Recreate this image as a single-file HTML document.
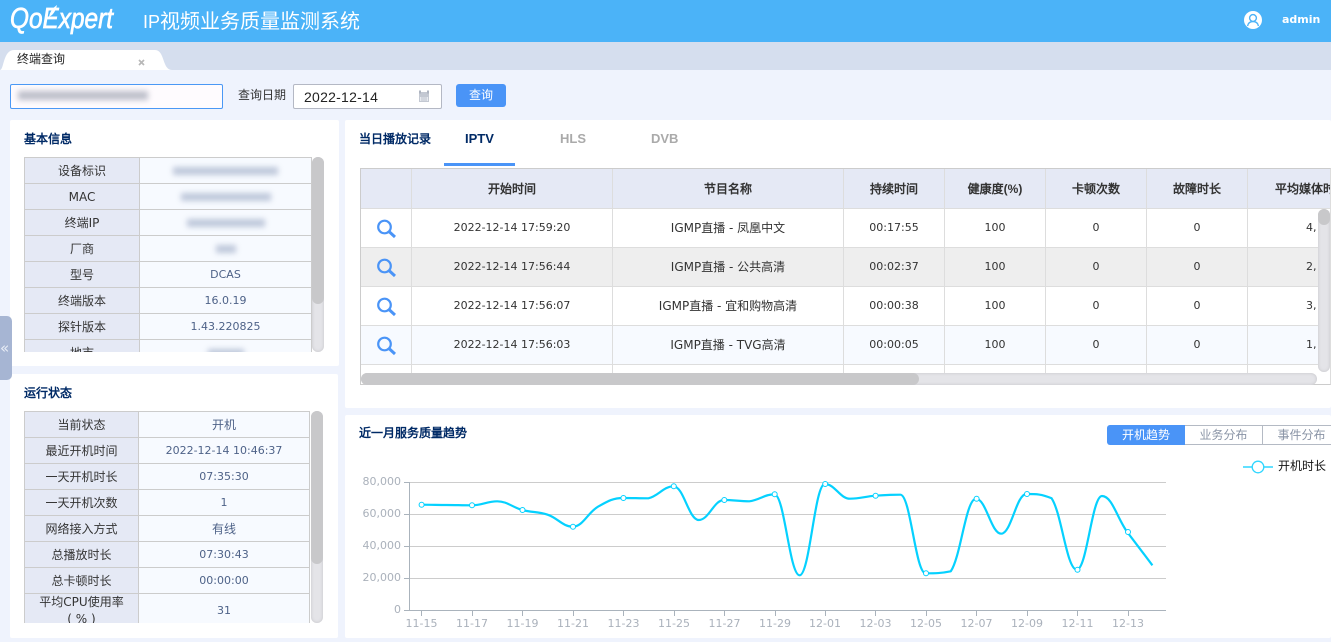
<!DOCTYPE html>
<html lang="zh"><head><meta charset="utf-8"><title>IP视频业务质量监测系统</title>
<style>
*{box-sizing:border-box}
html,body{margin:0;padding:0;width:1331px;height:642px;overflow:hidden;background:#eff3fd}
body{font-family:"DejaVu Sans","WenQuanYi Zen Hei","Noto Sans CJK SC",sans-serif;font-size:12px;color:#333;position:relative}
.a{position:absolute}
.t{position:absolute;white-space:nowrap}
.panel{position:absolute;background:#fff;border-radius:2px}
.title{position:absolute;white-space:nowrap;font-family:"Liberation Sans","WenQuanYi Zen Hei",sans-serif;font-weight:bold;color:#002a66;font-size:12px;line-height:16px}
table{border-collapse:collapse;table-layout:fixed;position:absolute;left:0;top:0}
td,th{border:1px solid #ccc;text-align:center;padding:0;font-size:12px;font-weight:normal;overflow:hidden}
.n{font-size:11px}
.info td{height:26px;line-height:14px}
.info td:first-child{background:#e5e9f5;color:#333}
.info td:last-child{background:#f7faff;color:#4e6288}
.blur{display:block;margin:auto;height:8px;background:#b4bfd4;filter:blur(3px);opacity:.85}
.rec th{height:39.5px;background:#e5e9f5;font-family:"Liberation Sans","WenQuanYi Zen Hei",sans-serif;font-weight:bold;border-color:#ddd}
.rec td{height:39px;border-color:#ddd;color:#333;font-size:11px}
.rec td.p{font-size:12px}
.rec tr.g td{background:#eee}
.rec tr.l td{background:#f7faff}
.track{position:absolute;background:#e4e4e8;border-radius:6px;box-shadow:inset 0 0 3px #c4c4c8}
.thumb{position:absolute;background:#c8c8ca;border-radius:6px}
svg text{font-family:"DejaVu Sans","WenQuanYi Zen Hei",sans-serif}
</style></head><body>

<div class="a" style="left:0;top:0;width:1331px;height:42px;background:#4bb3f8"></div>
<svg class="a" style="left:0;top:0" width="130" height="42"><text x="10" y="28" font-size="29" font-style="italic" fill="#fff" stroke="#fff" stroke-width=".7" textLength="103" lengthAdjust="spacingAndGlyphs" style="font-family:'Liberation Sans',sans-serif">QoExpert</text><path d="M49 17C50 11 53 8 57 5C56 9 55 12 52 15Z" fill="#fff"/></svg>
<div class="t" style="left:143px;top:10px;font-size:20px;line-height:24px;color:#fff;font-family:'Liberation Sans','WenQuanYi Zen Hei',sans-serif"><span style="font-size:18px">IP</span>视频业务质量监测系统</div>
<svg class="a" style="left:1244px;top:11px" width="18" height="18" viewBox="0 0 18 18"><circle cx="9" cy="9" r="9" fill="#fff"/><circle cx="9" cy="7" r="3.4" fill="none" stroke="#4bb3f8" stroke-width="1.4"/><path d="M3.600 15c.5-3 2.600-4.400 5.400-4.400s4.900 1.400 5.400 4.400" fill="none" stroke="#4bb3f8" stroke-width="1.4"/></svg>
<div class="t" style="left:1282px;top:12px;font-size:11px;line-height:16px;font-weight:bold;color:#fff">admin</div>

<div class="a" style="left:0;top:42px;width:1331px;height:28px;background:#d5deee"></div>
<svg class="a" style="left:0;top:49px" width="175" height="21"><path d="M0 21C4 21 3 1 14 1H155C165 1 162 21 172 21Z" fill="#fff"/></svg>
<div class="t" style="left:17px;top:51px;line-height:16px;color:#222">终端查询</div>
<svg class="a" style="left:138px;top:59px" width="7" height="7"><path d="M1 1L6 6M6 1L1 6" stroke="#b8b8b8" stroke-width="1.700"/></svg>

<div class="a" style="left:10px;top:84px;width:213px;height:25px;background:#fefbfe;border:1px solid #4a98f5;border-radius:2px"></div>
<div class="a" style="left:18px;top:91px;width:130px;height:9px;background:#bdbfca;filter:blur(3px)"></div>
<div class="t" style="left:238px;top:87px;line-height:16px;color:#333">查询日期</div>
<div class="a" style="left:293px;top:84px;width:149px;height:25px;background:#fff;border:1px solid #b4b8c4;border-radius:2px"></div>
<div class="t" style="left:304px;top:89px;font-family:'Liberation Sans',sans-serif;font-size:14px;line-height:16px;color:#222;letter-spacing:.25px">2022-12-14</div>
<svg class="a" style="left:418px;top:90px" width="12" height="13" viewBox="0 0 12 13"><rect x="1" y="2" width="10" height="10" fill="#c3c8d2"/><rect x="1" y="0.500" width="2" height="3" fill="#aeb4c0"/><rect x="9" y="0.500" width="2" height="3" fill="#aeb4c0"/><rect x="2" y="7" width="8" height="4" fill="#e8ebf0"/><path d="M4 7v4M6 7v4M8 7v4" stroke="#b0b6c2" stroke-width=".8"/></svg>
<div class="t" style="left:456px;top:84px;width:50px;height:23px;background:#4a94f7;border-radius:3px;color:#fff;text-align:center;line-height:22px">查询</div>

<!-- basic info -->
<div class="panel" style="left:10px;top:120px;width:329px;height:246px"></div>
<div class="title" style="left:24px;top:131px">基本信息</div>
<div class="a" style="left:24px;top:157px;width:288px;height:195px;overflow:hidden">
<table class="info" style="width:288px"><colgroup><col style="width:115px"><col></colgroup>
<tr><td>设备标识</td><td><span class="blur" style="width:105px"></span></td></tr>
<tr><td>MAC</td><td><span class="blur" style="width:90px"></span></td></tr>
<tr><td>终端IP</td><td><span class="blur" style="width:78px"></span></td></tr>
<tr><td>厂商</td><td><span class="blur" style="width:20px"></span></td></tr>
<tr><td>型号</td><td class="n">DCAS</td></tr>
<tr><td>终端版本</td><td class="n">16.0.19</td></tr>
<tr><td>探针版本</td><td class="n">1.43.220825</td></tr>
<tr><td>地市</td><td><span class="blur" style="width:36px"></span></td></tr>
</table></div>
<div class="track" style="left:312px;top:157px;width:12px;height:195px"></div>
<div class="thumb" style="left:312px;top:157px;width:12px;height:147px"></div>

<!-- run status -->
<div class="panel" style="left:10px;top:374px;width:328px;height:264px"></div>
<div class="title" style="left:24px;top:385px">运行状态</div>
<div class="a" style="left:24px;top:411px;width:286px;height:212px;overflow:hidden">
<table class="info" style="width:286px"><colgroup><col style="width:114px"><col></colgroup>
<tr><td>当前状态</td><td>开机</td></tr>
<tr><td>最近开机时间</td><td class="n">2022-12-14 10:46:37</td></tr>
<tr><td>一天开机时长</td><td class="n">07:35:30</td></tr>
<tr><td>一天开机次数</td><td class="n">1</td></tr>
<tr><td>网络接入方式</td><td>有线</td></tr>
<tr><td>总播放时长</td><td class="n">07:30:43</td></tr>
<tr><td>总卡顿时长</td><td class="n">00:00:00</td></tr>
<tr><td style="line-height:17px">平均CPU使用率<br>( % )</td><td class="n">31</td></tr>
</table></div>
<div class="track" style="left:311px;top:411px;width:12px;height:212px"></div>
<div class="thumb" style="left:311px;top:411px;width:12px;height:153px"></div>

<div class="a" style="left:0;top:316px;width:12px;height:64px;background:#a6b5d3;border-radius:0 5px 5px 0"></div>
<div class="t" style="left:0;top:339px;color:#e8edf6;font-size:15px;line-height:18px">«</div>

<!-- records -->
<div class="panel" style="left:345px;top:120px;width:986px;height:288px"></div>
<div class="title" style="left:359px;top:131px">当日播放记录</div>
<div class="t" style="left:465px;top:131px;font-family:'Liberation Sans',sans-serif;font-weight:bold;color:#002a66;line-height:16px;font-size:13px">IPTV</div>
<div class="t" style="left:560px;top:131px;font-family:'Liberation Sans',sans-serif;font-weight:bold;color:#aaa;line-height:16px;font-size:13px">HLS</div>
<div class="t" style="left:651px;top:131px;font-family:'Liberation Sans',sans-serif;font-weight:bold;color:#aaa;line-height:16px;font-size:13px">DVB</div>
<div class="a" style="left:444px;top:163px;width:71px;height:3px;background:#4a94f7"></div>

<div class="a" style="left:360px;top:168px;width:971px;height:217px;border:1px solid #ccc;border-right:1px solid #ddd;overflow:hidden">
<table class="rec" style="width:1120px;left:-1px;top:-1px"><colgroup><col style="width:51px"><col style="width:201px"><col style="width:231px"><col style="width:101px"><col style="width:101px"><col style="width:101px"><col style="width:101px"><col style="width:233px"></colgroup>
<tr><th></th><th>开始时间</th><th>节目名称</th><th>持续时间</th><th>健康度(%)</th><th>卡顿次数</th><th>故障时长</th><th style="text-align:left;padding-left:27px;white-space:nowrap">平均媒体时长</th></tr>
<tr><td></td><td>2022-12-14 17:59:20</td><td class="p">IGMP直播 - 凤凰中文</td><td>00:17:55</td><td>100</td><td>0</td><td>0</td><td style="text-align:left;padding-left:58px">4,</td></tr>
<tr class="g"><td></td><td>2022-12-14 17:56:44</td><td class="p">IGMP直播 - 公共高清</td><td>00:02:37</td><td>100</td><td>0</td><td>0</td><td style="text-align:left;padding-left:58px">2,</td></tr>
<tr><td></td><td>2022-12-14 17:56:07</td><td class="p">IGMP直播 - 宜和购物高清</td><td>00:00:38</td><td>100</td><td>0</td><td>0</td><td style="text-align:left;padding-left:58px">3,</td></tr>
<tr class="l"><td></td><td>2022-12-14 17:56:03</td><td class="p">IGMP直播 - TVG高清</td><td>00:00:05</td><td>100</td><td>0</td><td>0</td><td style="text-align:left;padding-left:58px">1,</td></tr>
<tr><td></td><td></td><td></td><td></td><td></td><td></td><td></td><td></td></tr>
</table></div>
<svg class="a" style="left:376px;top:218px" width="20" height="145" viewBox="0 0 20 145" fill="none" stroke="#4a94f7"><g><circle cx="8.500" cy="9" r="6.300" stroke-width="2.200"/><path d="M13 13.500L19 19" stroke-width="3"/></g><g transform="translate(0 39)"><circle cx="8.500" cy="9" r="6.300" stroke-width="2.200"/><path d="M13 13.500L19 19" stroke-width="3"/></g><g transform="translate(0 78)"><circle cx="8.500" cy="9" r="6.300" stroke-width="2.200"/><path d="M13 13.500L19 19" stroke-width="3"/></g><g transform="translate(0 117)"><circle cx="8.500" cy="9" r="6.300" stroke-width="2.200"/><path d="M13 13.500L19 19" stroke-width="3"/></g></svg>
<div class="a" style="left:1318px;top:209px;width:12px;height:175px;background:#fff"></div>
<div class="a" style="left:361px;top:373px;width:969px;height:11px;background:#fff"></div>
<div class="track" style="left:361px;top:373px;width:956px;height:12px"></div>
<div class="thumb" style="left:361px;top:373px;width:558px;height:12px"></div>
<div class="track" style="left:1318px;top:209px;width:12px;height:163px"></div>
<div class="thumb" style="left:1318px;top:209px;width:12px;height:16px"></div>

<!-- chart -->
<div class="panel" style="left:345px;top:415px;width:986px;height:223px"></div>
<div class="title" style="left:359px;top:425px">近一月服务质量趋势</div>
<div class="a" style="left:1107px;top:425px;width:78px;height:20px;background:#4a94f7;border-radius:3px 0 0 3px;color:#fff;text-align:center;line-height:20px">开机趋势</div>
<div class="a" style="left:1185px;top:425px;width:78px;height:20px;border:1px solid #b4bac4;border-left:0;color:#8a94a6;text-align:center;line-height:18px">业务分布</div>
<div class="a" style="left:1263px;top:425px;width:78px;height:20px;border:1px solid #b4bac4;border-left:0;color:#8a94a6;text-align:center;line-height:18px">事件分布</div>

<svg class="a" style="left:0;top:0" width="1331" height="642" viewBox="0 0 1331 642">
<path d="M1243 467h30" stroke="#2fd6ff" stroke-width="1.500"/><circle cx="1258" cy="467" r="5.800" fill="#fff" stroke="#2fd6ff" stroke-width="1.300"/>
<text x="1278" y="470" font-size="12" fill="#111">开机时长</text>
<g stroke="#ccc" stroke-width="1"><path d="M409 482.500H1166M409 514.500H1166M409 546.500H1166M409 578.500H1166"/></g>
<g stroke="#aab3bc" stroke-width="1" fill="none"><path d="M409.500 482V610.500H1166"/><path d="M404 482.500h5M404 514.500h5M404 546.500h5M404 578.500h5M404 610.500h5"/>
<path d="M421.500 611v5M472.500 611v5M522.500 611v5M573.500 611v5M623.500 611v5M674.500 611v5M724.500 611v5M775.500 611v5M825.500 611v5M875.500 611v5M926.500 611v5M976.500 611v5M1027.500 611v5M1077.500 611v5M1128.500 611v5"/></g>
<g font-size="11" fill="#aab1bb" text-anchor="end"><text x="401" y="485">80,000</text><text x="401" y="517">60,000</text><text x="401" y="549">40,000</text><text x="401" y="581">20,000</text><text x="401" y="613">0</text></g>
<g font-size="11" fill="#aab1bb" text-anchor="middle"><text x="421.500" y="627">11-15</text><text x="472" y="627">11-17</text><text x="522.500" y="627">11-19</text><text x="573" y="627">11-21</text><text x="623.500" y="627">11-23</text><text x="674" y="627">11-25</text><text x="724.500" y="627">11-27</text><text x="775" y="627">11-29</text><text x="825" y="627">12-01</text><text x="875.500" y="627">12-03</text><text x="926" y="627">12-05</text><text x="976.500" y="627">12-07</text><text x="1027" y="627">12-09</text><text x="1077.500" y="627">12-11</text><text x="1128" y="627">12-13</text></g>
<path fill="none" stroke="#05d1ff" stroke-width="2.200" stroke-linejoin="round" d="M421.600 504.700c10.100 0 15.100 .24 25.200 .3c10.100 .06 15.100 .3 25.200 .3c10.100 0 15.100 -4 25.200 -4c10.100 0 15.100 6 25.200 8.700c10.100 2.700 15.100 1.400 25.200 4.700c10.100 3.300 15.100 12 25.200 12c10.100 0 15.100 -14.300 25.200 -20c10.100 -5.700 15.100 -8.700 25.200 -8.700c10.100 0 15.100 .3 25.200 .3c10.100 -2.300 15.100 -12 25.200 -12c10.100 0 15.100 33.700 25.200 33.700c10.100 0 15.100 -20 25.200 -20c10.100 0 15.100 1.300 25.200 1.300c10.100 -1.100 15.100 -7 25.200 -7c10.100 0 15.100 81 25.200 81c10.100 0 15.100 -91.300 25.200 -91.300c10.100 0 15.100 14.700 25.200 14.700c10.100 0 15.100 -2.200 25.200 -3c10.100 -.8 15.100 -1 25.200 -1c10.100 0 15.100 78.600 25.200 78.600c10.100 0 15.100 0 25.200 -2c10.100 -14.900 15.100 -72.600 25.200 -72.600c10.100 0 15.100 35 25.200 35c10.100 0 15.100 -39.700 25.200 -39.700c10.100 0 15.100 0 25.200 4.300c10.100 15.100 15.100 71.400 25.200 71.400c10.100 0 15.100 -73.700 25.200 -73.700c10.100 0 15.100 22.100 25.200 36c10.100 13.200 15.100 20 25.200 33.300"/>
<g fill="#fff" stroke="#05d1ff" stroke-width="1"><circle cx="421.600" cy="504.700" r="2.500"/><circle cx="472" cy="505.300" r="2.500"/><circle cx="522.500" cy="510" r="2.500"/><circle cx="573" cy="526.700" r="2.500"/><circle cx="623.400" cy="498" r="2.500"/><circle cx="673.800" cy="486.300" r="2.500"/><circle cx="724.300" cy="500" r="2.500"/><circle cx="774.700" cy="494.300" r="2.500"/><circle cx="825.200" cy="484" r="2.500"/><circle cx="875.600" cy="495.700" r="2.500"/><circle cx="926" cy="573.300" r="2.500"/><circle cx="976.600" cy="498.700" r="2.500"/><circle cx="1027" cy="494" r="2.500"/><circle cx="1077.500" cy="569.700" r="2.500"/><circle cx="1128" cy="532" r="2.500"/></g>
</svg>
</body></html>
